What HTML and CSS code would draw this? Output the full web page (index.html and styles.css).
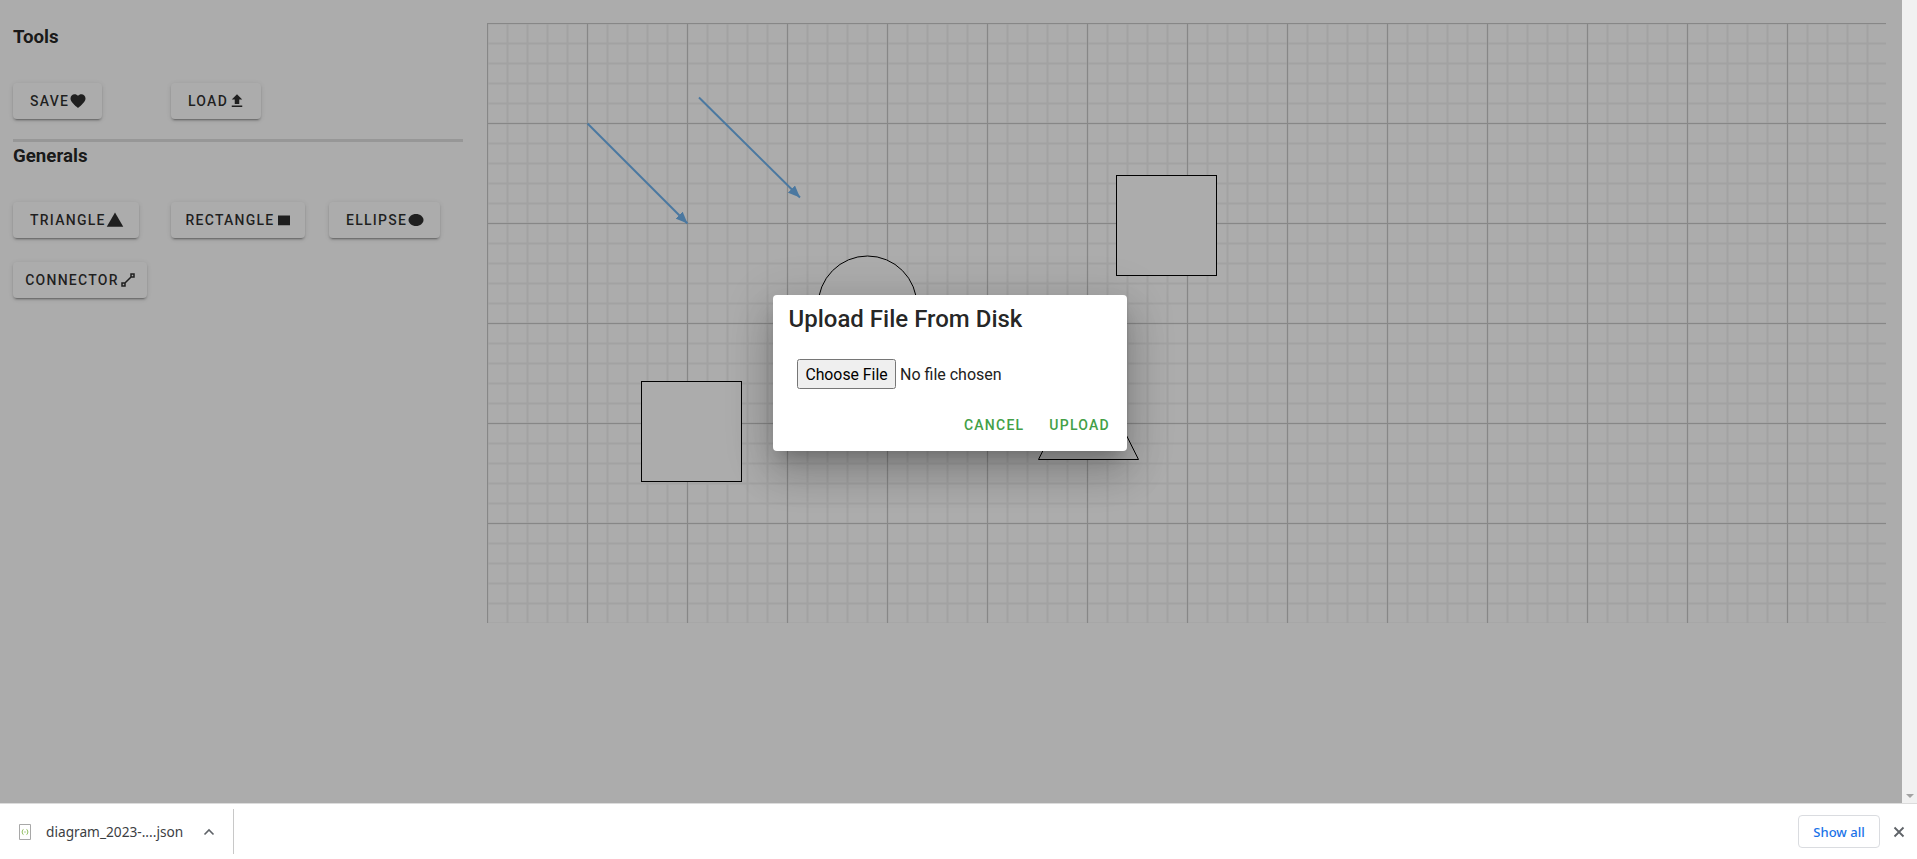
FILE: index.html
```html
<!DOCTYPE html>
<html lang="en">
<head>
  <meta charset="UTF-8">
  <meta name="viewport" content="width=device-width, initial-scale=1.0">
  <title>Diagram editor</title>
  <link rel="stylesheet" href="styles.css">
</head>
<body>
<div class="window">
  <div class="page">
    <main class="editor">
      <aside class="sidebar">
        <h2 class="section-title">Tools</h2>
        <div class="btn-grid">
          <button class="btn">Save<svg class="icon" viewBox="0 0 24 24"><path d="M12,21.35L10.55,20.03C5.4,15.36 2,12.27 2,8.5C2,5.41 4.42,3 7.5,3C9.24,3 10.91,3.81 12,5.08C13.09,3.81 14.76,3 16.5,3C19.58,3 22,5.41 22,8.5C22,12.27 18.6,15.36 13.45,20.03L12,21.35Z"/></svg></button>
          <button class="btn">Load<svg class="icon" viewBox="0 0 24 24"><path d="M9,16V10H5L12,3L19,10H15V16H9M5,20V18H19V20H5Z"/></svg></button>
        </div>
        <hr class="divider">
        <h2 class="section-title">Generals</h2>
        <div class="btn-grid">
          <button class="btn">Triangle<svg class="icon" viewBox="0 0 24 24"><path d="M1,21H23L12,2"/></svg></button>
          <button class="btn">Rectangle<svg class="icon" viewBox="0 0 24 24"><path d="M4,6V19H20V6H4Z"/></svg></button>
          <button class="btn">Ellipse<svg class="icon" viewBox="0 0 24 24"><path d="M12,4C6.5,4 2,7.58 2,12C2,16.42 6.5,20 12,20C17.5,20 22,16.42 22,12C22,7.58 17.5,4 12,4Z"/></svg></button>
          <button class="btn">Connector<svg class="icon" viewBox="0 0 24 24"><path d="M15,3V7.59L7.59,15H3V21H9V16.42L16.42,9H21V3M17,5H19V7H17M5,17H7V19H5"/></svg></button>
        </div>
      </aside>

      <svg class="canvas" width="1399" height="600" viewBox="0 0 1399 600">
        <defs>
          <pattern id="smallGrid" x="-10" y="-10" width="20" height="20" patternUnits="userSpaceOnUse">
            <path d="M 10.5 0 V 20 M 0 10.5 H 20" fill="none" stroke="#f1f1f1" stroke-width="2"/>
          </pattern>
          <pattern id="grid" x="-50" y="-50" width="100" height="100" patternUnits="userSpaceOnUse">
            <path d="M 50.5 0 V 100 M 0 50.5 H 100" fill="none" stroke="#c8c8c8" stroke-width="1"/>
          </pattern>
          <marker id="arrowHead" markerWidth="12" markerHeight="10" refX="12" refY="5" orient="auto" markerUnits="userSpaceOnUse">
            <path d="M0,0 L12,5 L0,10 Z" fill="#6fb3ee"/>
          </marker>
        </defs>
        <rect width="1399" height="600" fill="url(#smallGrid)"/>
        <rect width="1399" height="600" fill="url(#grid)"/>
        <line class="connector" x1="100.5" y1="100.5" x2="200.5" y2="200.5" marker-end="url(#arrowHead)"/>
        <line class="connector" x1="212" y1="74.5" x2="313" y2="174.5" marker-end="url(#arrowHead)"/>
        <ellipse class="shape" cx="380.5" cy="283" rx="49.5" ry="50"/>
        <rect class="shape" x="629.5" y="152.5" width="100" height="100"/>
        <rect class="shape" x="154.5" y="358.5" width="100" height="100"/>
        <path class="shape" d="M601.5 336.5 L651.5 436.5 L551.5 436.5 Z"/>
      </svg>
    </main>

    <div class="overlay">
      <div class="dialog">
        <h3 class="dialog-title">Upload File From Disk</h3>
        <div class="dialog-body"><input class="file-input" type="file"></div>
        <div class="dialog-actions">
          <button class="text-btn">Cancel</button>
          <button class="text-btn">Upload</button>
        </div>
      </div>
    </div>
  </div>
  <div class="scrollbar"><span class="scroll-arrow"></span></div>
</div>

<footer class="download-bar">
  <div class="download-item">
    <svg class="file-icon" width="12" height="16" viewBox="0 0 12 16">
      <path d="M0.5 0.5H11.5V15.5H0.5Z" fill="#fff" stroke="#a8a8a8"/>
      <path d="M4.4 5.5C3.2 5.5 3.8 7.6 2.8 8C3.8 8.4 3.2 10.5 4.4 10.5M7.6 5.5C8.8 5.5 8.2 7.6 9.2 8C8.2 8.4 8.8 10.5 7.6 10.5M5.4 8H6.6" fill="none" stroke="#7cb342" stroke-width="1"/>
    </svg>
    <span class="file-name">diagram_2023-....json</span>
    <svg class="chevron" width="12" height="8" viewBox="0 0 12 8"><path d="M1.5 6.5L6 2L10.5 6.5" fill="none" stroke="#5f6368" stroke-width="1.6"/></svg>
  </div>
  <div class="bar-sep"></div>
  <button class="show-all">Show all</button>
  <svg class="close" width="12" height="12" viewBox="0 0 12 12"><path d="M1.5 1.5L10.5 10.5M10.5 1.5L1.5 10.5" stroke="#5f6368" stroke-width="1.8"/></svg>
</footer>
</body>
</html>
```

FILE: styles.css
```css
* {
  box-sizing: border-box;
}

html, body {
  height: 100%;
  margin: 0;
}

body {
  display: flex;
  flex-direction: column;
  overflow: hidden;
  background-color: #fff;
  font-family: Roboto, sans-serif;
  color: rgba(0, 0, 0, 0.87);
}

.window {
  display: flex;
  height: 803px;
}

.page {
  position: relative;
  flex: 1;
  overflow: hidden;
}

.editor {
  display: flex;
  align-items: flex-start;
  gap: 24px;
  padding: 23px 0 0 13px;
}

.sidebar {
  width: 450px;
  flex-shrink: 0;
}

.section-title {
  margin: 0 0 33px;
  padding-top: 1px;
  font-size: 18.7px;
  font-weight: 700;
  line-height: 26px;
}

.btn-grid {
  display: grid;
  grid-template-columns: repeat(3, 158px);
  row-gap: 24px;
}

.btn {
  display: inline-flex;
  align-items: center;
  justify-content: center;
  width: fit-content;
  max-width: 134px;
  height: 36px;
  padding: 0 15px 0 17px;
  border: none;
  border-radius: 4px;
  background-color: #fff;
  box-shadow: 0 3px 1px -2px rgba(0, 0, 0, 0.2), 0 2px 2px 0 rgba(0, 0, 0, 0.14), 0 1px 5px 0 rgba(0, 0, 0, 0.12);
  color: rgba(0, 0, 0, 0.82);
  font-family: Roboto, sans-serif;
  font-size: 14px;
  font-weight: 500;
  letter-spacing: 1.25px;
  text-transform: uppercase;
  white-space: nowrap;
}

.icon {
  width: 18px;
  height: 18px;
  flex-shrink: 0;
  fill: currentColor;
}

.divider {
  height: 3px;
  margin: 20px 0 0;
  border: none;
  background-color: #e0e0e0;
}

.canvas {
  display: block;
  flex-shrink: 0;
}

.shape {
  fill: #fff;
  stroke: #000;
  stroke-width: 1;
}

.connector {
  stroke: #6fb3ee;
  stroke-width: 2;
}

.overlay {
  position: absolute;
  top: 0;
  left: 0;
  right: 0;
  bottom: 0;
  display: flex;
  justify-content: center;
  align-items: flex-start;
  padding: 295px 2px 0 0;
  background-color: rgba(0, 0, 0, 0.325);
}

.dialog {
  width: 354px;
  height: 156px;
  border-radius: 4px;
  background-color: #fff;
  box-shadow: 0 11px 15px -7px rgba(0, 0, 0, 0.2), 0 24px 38px 3px rgba(0, 0, 0, 0.14), 0 9px 46px 8px rgba(0, 0, 0, 0.12);
}

.dialog-title {
  margin: 0;
  padding: 8px 16px 0 15.5px;
  font-size: 24px;
  font-weight: 500;
  line-height: 32px;
}

.dialog-body {
  padding: 24px 24px 0;
}

.file-input {
  display: block;
  font-family: Roboto, sans-serif;
  font-size: 16px;
  color: #212121;
}

.file-input::file-selector-button {
  width: 99px;
  height: 30px;
  margin-right: 4px;
  padding: 0;
  font-family: Roboto, sans-serif;
  font-size: 15.8px;
}

.dialog-actions {
  display: flex;
  justify-content: flex-end;
  gap: 9px;
  padding: 18px 9px 0;
}

.text-btn {
  height: 36px;
  padding: 0 8px;
  border: none;
  background: none;
  color: #43a047;
  font-family: Roboto, sans-serif;
  font-size: 14px;
  font-weight: 500;
  letter-spacing: 1.25px;
  text-transform: uppercase;
}

.scrollbar {
  display: flex;
  align-items: flex-end;
  justify-content: center;
  width: 15px;
  padding-bottom: 5px;
  background-color: #f1f1f1;
}

.scroll-arrow {
  border-left: 4px solid transparent;
  border-right: 4px solid transparent;
  border-top: 4px solid #a3a3a3;
}

.download-bar {
  display: flex;
  align-items: center;
  height: 56px;
  padding: 4px 12px 4px 19px;
  border-top: 1px solid #dcdcdc;
  background-color: #fff;
}

.download-item {
  display: flex;
  align-items: center;
  width: 198px;
}

.file-icon {
  margin-right: 15px;
}

.file-name {
  width: 157px;
  flex-shrink: 0;
  color: #3c4043;
  font-family: "Noto Sans", sans-serif;
  font-size: 13.7px;
}

.bar-sep {
  width: 1px;
  height: 45px;
  margin-left: 16px;
  background-color: #c8c8c8;
}

.show-all {
  margin-left: auto;
  width: 82px;
  height: 33px;
  border: 1px solid #dadce0;
  border-radius: 4px;
  background-color: #fff;
  color: #1a73e8;
  font-family: "Noto Sans", sans-serif;
  font-size: 13px;
  font-weight: 500;
}

.close {
  margin-left: 13px;
}
```
